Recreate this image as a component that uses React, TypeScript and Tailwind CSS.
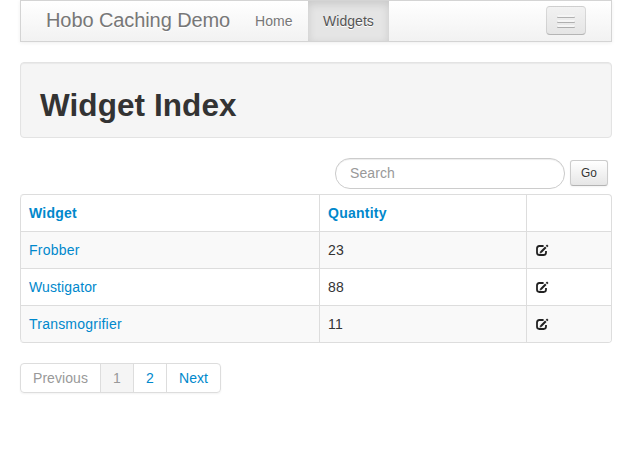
import React from "react";

const widgets = [
  { name: "Frobber", quantity: 23, tracking: "tracking-[0.25px]" },
  { name: "Wustigator", quantity: 88, tracking: "tracking-[0.12px]" },
  { name: "Transmogrifier", quantity: 11, tracking: "tracking-[0.22px]" },
];

function EditIcon() {
  return (
    <svg viewBox="0 0 14 14" className="mt-[4px] h-[14px] w-[14px]" fill="none" stroke="#222">
      <path d="M8.6 2H4.4Q2 2 2 4.4V8.6Q2 11 4.4 11H8.6Q11 11 11 8.6V7" strokeWidth="1.8" />
      <path d="M5.8 8.2L10.8 3.2" strokeWidth="2" />
      <path d="M11.5 2.5L12.8 1.2" strokeWidth="2" />
      <path d="M4.6 9.4L5 7.4L6.6 9Z" fill="#222" stroke="none" />
    </svg>
  );
}

function Navbar() {
  const bar = "h-[2px] w-[18px] rounded-[1px] bg-[#f5f5f5] shadow-[0_1px_0_rgba(0,0,0,0.25)]";
  return (
    <nav className="flex h-[42px] items-stretch border border-[#d4d4d4] bg-linear-to-b from-white to-[#f2f2f2] pr-[25px] pl-[25px] text-[#777] shadow-[0_1px_4px_rgba(0,0,0,0.067)] [text-shadow:0_1px_0_#fff]">
      <a className="w-[194px] pt-[9px] text-[20px] leading-[20px] tracking-[-0.09px] whitespace-nowrap">Hobo Caching Demo</a>
      <a className="w-[68px] pt-[10px] pl-[15px] tracking-[0.1px]">Home</a>
      <a className="w-[81px] bg-[#e5e5e5] pt-[10px] pl-[15px] tracking-[0.05px] text-[#555] shadow-[inset_0_3px_8px_rgba(0,0,0,0.125)]">Widgets</a>
      <button className="mt-[5px] ml-auto flex h-[29px] w-[40px] flex-col items-center gap-[3px] rounded-[4px] border border-black/10 border-b-black/25 bg-linear-to-b from-[#f2f2f2] to-[#e5e5e5] pt-[8px] shadow-[inset_0_1px_0_rgba(255,255,255,0.1),0_1px_0_rgba(255,255,255,0.075)]">
        <span className={bar} />
        <span className={bar} />
        <span className={bar} />
      </button>
    </nav>
  );
}

export default function App() {
  return (
    <div className="h-[459px] w-[617px] bg-white pr-[5px] pl-[20px] font-['Liberation_Sans',Arial,sans-serif] text-[14px] leading-[20px] text-[#333]">
      <Navbar />
      <header className="mt-[20px] h-[76px] rounded-[4px] border border-[#e3e3e3] bg-[#f5f5f5] pt-[22px] pl-[19px] shadow-[inset_0_1px_1px_rgba(0,0,0,0.05)]">
        <h1 className="text-[31.5px] leading-[40px] font-bold tracking-[0.07px]">Widget Index</h1>
      </header>
      <form className="mt-[20px] flex h-[36px] justify-end gap-[5px] pr-[4px]">
        <input
          className="h-[31px] w-[230px] rounded-[15px] border border-[#ccc] bg-white px-[14px] pb-[2px] tracking-[0.1px] shadow-[inset_0_1px_1px_rgba(0,0,0,0.075)] placeholder:text-[#999]"
          placeholder="Search"
        />
        <button
          type="button"
          className="mt-[2px] h-[26px] w-[38px] rounded-[3px] border border-[#ccc] border-b-[#b3b3b3] bg-linear-to-b from-white to-[#e6e6e6] text-[11.9px] leading-[20px] shadow-[inset_0_1px_0_rgba(255,255,255,0.2),0_1px_2px_rgba(0,0,0,0.05)] [text-shadow:0_1px_1px_rgba(255,255,255,0.75)]"
        >
          Go
        </button>
      </form>
      <table className="w-full table-fixed border-separate border-spacing-0 overflow-hidden rounded-[4px] border border-l-0 border-[#ddd] text-left">
        <colgroup>
          <col className="w-[299px]" />
          <col className="w-[207px]" />
          <col />
        </colgroup>
        <thead>
          <tr className="h-[36px] align-top font-bold tracking-[0.25px] text-[#0088cc]">
            <th className="rounded-tl-[4px] border-l border-[#ddd] px-[8px] py-[8px]">Widget</th>
            <th className="border-l border-[#ddd] px-[8px] py-[8px]">Quantity</th>
            <th className="border-l border-[#ddd]" />
          </tr>
        </thead>
        <tbody>
          {widgets.map((w) => (
            <tr key={w.name} className="group h-[37px] align-top odd:bg-[#f9f9f9]">
              <td className="border-t border-l border-[#ddd] p-[8px] text-[#0088cc] group-last:rounded-bl-[4px]">
                <a className={w.tracking}>{w.name}</a>
              </td>
              <td className="border-t border-l border-[#ddd] p-[8px] tracking-[0.2px]">{w.quantity}</td>
              <td className="border-t border-l border-[#ddd] px-[8px] pt-[8px]">
                <EditIcon />
              </td>
            </tr>
          ))}
        </tbody>
      </table>
      <nav className="mt-[20px] flex h-[30px] w-[201px] divide-x divide-[#ddd] overflow-hidden rounded-[4px] border border-[#ddd] leading-[28px] text-[#0088cc] shadow-[0_1px_2px_rgba(0,0,0,0.05)]">
        <a className="w-[80px] pl-[12px] tracking-[0.06px] text-[#999]">Previous</a>
        <a className="w-[33px] bg-[#f5f5f5] pl-[12px] text-[#999]">1</a>
        <a className="w-[33px] pl-[12px]">2</a>
        <a className="flex-1 pl-[12px] tracking-[0.06px]">Next</a>
      </nav>
    </div>
  );
}
